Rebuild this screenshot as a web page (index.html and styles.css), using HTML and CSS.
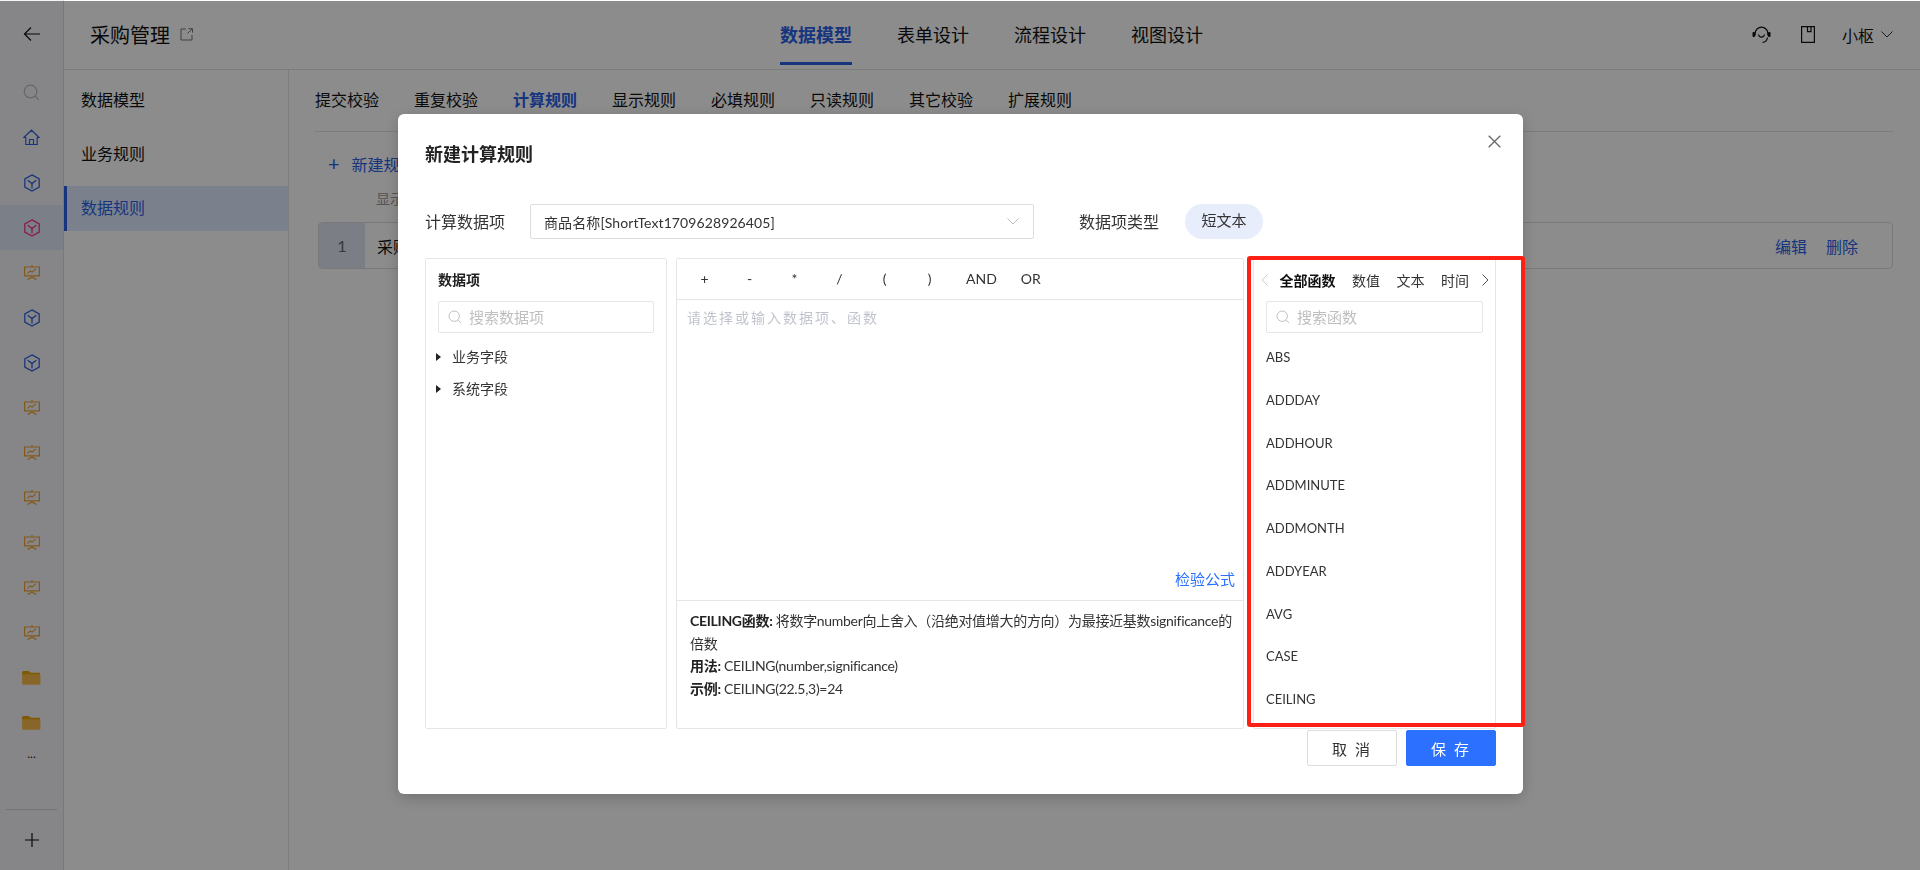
FILE: index.html
```html
<!DOCTYPE html>
<html lang="zh-CN">
<head>
    <meta charset="UTF-8">
    <meta name="viewport" content="width=device-width, initial-scale=1.0">
    <title>采购管理 - 数据规则</title>
    <link rel="stylesheet" href="styles.css">
</head>
<body>

<svg class="defs" width="0" height="0">
    <symbol id="cube" viewBox="0 0 18 18"><path d="M9 .9l7.2 4.1v8L9 17.1 1.8 13V5z M9 9.6V14.500 M4.700 6.300L9 9.6l4.300-3.300" fill="none" stroke="currentColor" stroke-width="1.3"/></symbol>
    <symbol id="screen" viewBox="0 0 16 15"><path d="M8 0v2 M.6 2h14.800v8.800H.6z M3.400 8.400l2.800-2.500 1.900 1.200 3.600-3.200 M8 10.800v1.200 M3.600 14.600L8 12l4.400 2.600" fill="none" stroke="currentColor" stroke-width="1.200"/></symbol>
    <symbol id="folder" viewBox="0 0 20 16"><path d="M1 1h6l2 2h10v3H0V2z" fill="#e8a200"/><path d="M0 4.500h19.500v10.200a1 1 0 0 1-1 1H1a1 1 0 0 1-1-1z" fill="#f7bb4e"/></symbol>
    <symbol id="search" viewBox="0 0 14 14"><circle cx="6.200" cy="6.200" r="5.200" fill="none" stroke="currentColor"/><path d="M10 10l3 3" fill="none" stroke="currentColor"/></symbol>
</svg>

<div class="page">
    <div class="rail">
        <div class="rail-back">
            <svg width="18" height="16" viewBox="0 0 18 16"><path d="M17 8H1.500M8 1.500L1.500 8 8 14.500" fill="none" stroke="#111" stroke-width="1.200"/></svg>
        </div>
        <div class="rail-item rail-gray"><svg width="17" height="17"><use href="#search"/></svg></div>
        <div class="rail-item rail-blue">
            <svg width="17" height="17" viewBox="0 0 17 17"><path d="M.8 8.500L8.500 1.200l7.700 7.300h-2v7H2.800v-7z M6.500 15.500v-5h4v5" fill="none" stroke="currentColor" stroke-width="1.200"/></svg>
        </div>
        <div class="rail-item rail-blue"><svg width="18" height="18"><use href="#cube"/></svg></div>
        <div class="rail-item rail-pink rail-active"><svg width="18" height="18"><use href="#cube"/></svg></div>
        <div class="rail-item rail-orange"><svg width="16" height="15"><use href="#screen"/></svg></div>
        <div class="rail-item rail-blue"><svg width="18" height="18"><use href="#cube"/></svg></div>
        <div class="rail-item rail-blue"><svg width="18" height="18"><use href="#cube"/></svg></div>
        <div class="rail-item rail-orange"><svg width="16" height="15"><use href="#screen"/></svg></div>
        <div class="rail-item rail-orange"><svg width="16" height="15"><use href="#screen"/></svg></div>
        <div class="rail-item rail-orange"><svg width="16" height="15"><use href="#screen"/></svg></div>
        <div class="rail-item rail-orange"><svg width="16" height="15"><use href="#screen"/></svg></div>
        <div class="rail-item rail-orange"><svg width="16" height="15"><use href="#screen"/></svg></div>
        <div class="rail-item rail-orange"><svg width="16" height="15"><use href="#screen"/></svg></div>
        <div class="rail-item"><svg width="19" height="15"><use href="#folder"/></svg></div>
        <div class="rail-item"><svg width="19" height="15"><use href="#folder"/></svg></div>
        <div class="rail-more">...</div>
        <div class="rail-add">
            <svg width="14" height="14" viewBox="0 0 14 14"><path d="M7 0v14M0 7h14" stroke="#111" stroke-width="1.200"/></svg>
        </div>
    </div>

    <div class="main">
        <div class="header">
            <div class="app-title">
                <span>采购管理</span>
                <svg width="13" height="13" viewBox="0 0 13 13"><path d="M6 1H1v11h11V7 M7.500 5.500L12 1 M8.500 .7h4v4" fill="none" stroke="#777" stroke-width="1"/></svg>
            </div>
            <div class="top-tabs">
                <a class="top-tab active">数据模型</a>
                <a class="top-tab">表单设计</a>
                <a class="top-tab">流程设计</a>
                <a class="top-tab">视图设计</a>
            </div>
            <div class="user-area">
                <svg width="19" height="18" viewBox="0 0 19 18"><path d="M3.200 9.500V7.500a6.300 6.300 0 0 1 12.600 0v2 M6.500 8.500c.5 3.500 5.500 3.500 6 0 M15.500 11.500c-.5 3-2.500 4.800-5 5" fill="none" stroke="#111" stroke-width="1.200"/><rect x="0.500" y="6" width="2.500" height="5" rx="1" fill="#111"/><rect x="16" y="6" width="2.500" height="5" rx="1" fill="#111"/></svg>
                <svg class="user-book" width="14" height="17" viewBox="0 0 14 17"><path d="M.6.600h12.800v15.800H.6z M6.500.6v5h3.500v-5" fill="none" stroke="#111" stroke-width="1.200"/></svg>
                <span class="user-name">小枢</span>
                <svg width="12" height="7" viewBox="0 0 12 7"><path d="M.5.500L6 6 11.500.5" fill="none" stroke="#333" stroke-width="1"/></svg>
            </div>
        </div>

        <div class="body">
            <div class="sidebar">
                <div class="side-item">数据模型</div>
                <div class="side-item">业务规则</div>
                <div class="side-item active">数据规则</div>
            </div>
            <div class="content">
                <div class="rule-tabs">
                    <span>提交校验</span>
                    <span>重复校验</span>
                    <span class="active">计算规则</span>
                    <span>显示规则</span>
                    <span>必填规则</span>
                    <span>只读规则</span>
                    <span>其它校验</span>
                    <span>扩展规则</span>
                </div>
                <div class="new-rule"><span class="new-plus">+</span>新建规则</div>
                <div class="rule-caption">显示规则</div>
                <div class="rule-row">
                    <div class="rule-index">1</div>
                    <div class="rule-name">采购数量</div>
                    <a>编辑</a>
                    <a>删除</a>
                </div>
            </div>
        </div>
    </div>
</div>

<div class="overlay"></div>

<div class="modal">
    <div class="modal-title">新建计算规则</div>
    <svg class="modal-close" width="13" height="13" viewBox="0 0 13 13"><path d="M.7.700l11.600 11.600M12.300.700L.7 12.300" stroke="#666" stroke-width="1.300"/></svg>

    <div class="form-row">
        <label class="form-label">计算数据项</label>
        <div class="select">
            <span>商品名称[ShortText1709628926405]</span>
            <svg width="12" height="7" viewBox="0 0 12 7"><path d="M.5.500L6 6 11.500.5" fill="none" stroke="#bbb" stroke-width="1"/></svg>
        </div>
        <label class="form-label type-label">数据项类型</label>
        <div class="pill">短文本</div>
    </div>

    <div class="panels">
        <div class="panel panel-left">
            <div class="panel-heading">数据项</div>
            <div class="search-box">
                <svg width="14" height="14"><use href="#search"/></svg>
                <span>搜索数据项</span>
            </div>
            <div class="tree-node">业务字段</div>
            <div class="tree-node">系统字段</div>
        </div>

        <div class="panel panel-mid">
            <div class="ops">
                <span>+</span><span>-</span><span>*</span><span>/</span><span>(</span><span>)</span>
                <span class="op-word">AND</span><span class="op-word">OR</span>
            </div>
            <div class="formula">
                <div class="formula-hint">请选择或输入数据项、函数</div>
                <a class="formula-check">检验公式</a>
            </div>
            <div class="func-desc">
                <p><b>CEILING函数:</b> 将数字number向上舍入（沿绝对值增大的方向）为最接近基数significance的倍数</p>
                <p><b>用法:</b> CEILING(number,significance)</p>
                <p><b>示例:</b> CEILING(22.5,3)=24</p>
            </div>
        </div>

        <div class="panel panel-right">
            <div class="func-tabs">
                <svg class="func-prev" width="7" height="12" viewBox="0 0 7 12"><path d="M6.500.5L1 6l5.500 5.500" fill="none" stroke="#ccc"/></svg>
                <b>全部函数</b><span>数值</span><span>文本</span><span>时间</span>
                <svg class="func-next" width="7" height="12" viewBox="0 0 7 12"><path d="M.5.5L6 6 .5 11.500" fill="none" stroke="#555"/></svg>
            </div>
            <div class="search-box">
                <svg width="14" height="14"><use href="#search"/></svg>
                <span>搜索函数</span>
            </div>
            <ul class="func-list">
                <li>ABS</li>
                <li>ADDDAY</li>
                <li>ADDHOUR</li>
                <li>ADDMINUTE</li>
                <li>ADDMONTH</li>
                <li>ADDYEAR</li>
                <li>AVG</li>
                <li>CASE</li>
                <li>CEILING</li>
            </ul>
        </div>
    </div>

    <div class="modal-footer">
        <button class="btn">取 消</button>
        <button class="btn btn-primary">保 存</button>
    </div>
</div>

<div class="red-mark"></div>

</body>
</html>
```

FILE: styles.css
```css
* {
    box-sizing: border-box;
}
html, body {
    margin: 0;
    height: 100%;
    overflow: hidden;
}
body {
    font-family: Lato, "Noto Sans CJK SC", sans-serif;
    font-size: 14px;
    color: #222;
    background-color: #fff;
}
.defs {
    position: absolute;
}
.page {
    display: flex;
    height: 870px;
}

/* left icon rail */
.rail {
    width: 64px;
    flex-shrink: 0;
    display: flex;
    flex-direction: column;
    background-color: #f4f5f7;
    border-right: 1px solid #dcdcdc;
}
.rail-back {
    height: 70px;
    flex-shrink: 0;
    display: flex;
    align-items: center;
    justify-content: center;
    padding-bottom: 2px;
}
.rail-item {
    height: 45px;
    flex-shrink: 0;
    display: flex;
    align-items: center;
    justify-content: center;
}
.rail-gray { color: #bbb; }
.rail-blue { color: #2f62e0; }
.rail-pink { color: #f5337f; }
.rail-orange { color: #f0a030; }
.rail-active { background-color: #e1e9f8; }
.rail-more {
    height: 30px;
    text-align: center;
    line-height: 18px;
    font-size: 12px;
    color: #111;
}
.rail-add {
    margin: auto 6px 0;
    height: 61px;
    border-top: 1px solid #d4d4d4;
    display: flex;
    align-items: center;
    justify-content: center;
}

/* header */
.main {
    flex: 1;
    min-width: 0;
    display: flex;
    flex-direction: column;
}
.header {
    height: 70px;
    flex-shrink: 0;
    display: grid;
    grid-template-columns: 1fr auto 1fr;
    align-items: center;
    padding: 0 27px 0 26px;
    border-bottom: 1px solid #e2e2e2;
}
.app-title {
    display: flex;
    align-items: center;
    gap: 10px;
    font-size: 20px;
    color: #111;
}
.top-tabs {
    display: flex;
    gap: 45px;
    height: 69px;
}
.top-tab {
    height: 65px;
    line-height: 70px;
    font-size: 18px;
    color: #111;
}
.top-tab.active {
    font-weight: 700;
    color: #2b62e8;
    border-bottom: 3px solid #2b62e8;
}
.user-area {
    display: flex;
    align-items: center;
    justify-content: flex-end;
}
.user-book {
    margin-left: 30px;
}
.user-name {
    margin: 0 7px 0 27px;
    font-size: 16px;
    color: #111;
}

/* body */
.body {
    flex: 1;
    display: flex;
    min-height: 0;
}
.sidebar {
    width: 225px;
    flex-shrink: 0;
    padding-top: 8px;
    border-right: 1px solid #e2e2e2;
}
.side-item {
    height: 45px;
    margin-bottom: 9px;
    line-height: 43px;
    padding-left: 17px;
    font-size: 16px;
    color: #111;
}
.side-item.active {
    padding-left: 14px;
    border-left: 3px solid #2b62e8;
    color: #2b62e8;
    background-color: #e1ecff;
}
.content {
    flex: 1;
    padding: 0 27px 0 26px;
}
.rule-tabs {
    height: 62px;
    display: flex;
    align-items: center;
    gap: 35px;
    padding-bottom: 3px;
    font-size: 16px;
    color: #111;
    border-bottom: 1px solid #e2e2e2;
}
.rule-tabs .active {
    font-weight: 700;
    color: #2b62e8;
}
.new-rule {
    height: 28px;
    margin: 17px 0 0 13px;
    font-size: 16px;
    line-height: 28px;
    color: #2b62e8;
}
.new-plus {
    margin-right: 12px;
    font-size: 20px;
}
.rule-caption {
    height: 20px;
    margin: 12px 0 0 61px;
    font-size: 14px;
    line-height: 20px;
    color: #999;
}
.rule-row {
    height: 47px;
    margin: 13px 0 0 3px;
    display: flex;
    align-items: center;
    border: 1px solid #ddd;
    border-radius: 4px;
    overflow: hidden;
}
.rule-row a {
    margin-right: 19px;
    font-size: 16px;
    color: #2b62e8;
}
.rule-row a:last-child {
    margin-right: 34px;
}
.rule-index {
    width: 46px;
    height: 100%;
    line-height: 45px;
    text-align: center;
    font-size: 16px;
    color: #666;
    background-color: #e0e5f0;
}
.rule-name {
    flex: 1;
    padding-left: 12px;
    font-size: 16px;
    color: #111;
}

.overlay {
    position: fixed;
    inset: 1px 0 0;
    background-color: rgba(0,0,0,.45);
}

/* dialog */
.modal {
    position: fixed;
    left: 398px;
    top: 114px;
    width: 1125px;
    height: 680px;
    padding: 0 27px;
    background-color: #fff;
    border-radius: 6px;
    box-shadow: 0 4px 16px rgba(0,0,0,.2);
}
.modal-title {
    height: 90px;
    padding-top: 27px;
    font-size: 18px;
    font-weight: 700;
    line-height: 26px;
    color: #222;
}
.modal-close {
    position: absolute;
    right: 22px;
    top: 21px;
}
.form-row {
    height: 35px;
    display: flex;
    align-items: center;
}
.form-label {
    padding-bottom: 2px;
    font-size: 16px;
    color: #333;
    width: 105px;
}
.select {
    width: 504px;
    height: 35px;
    display: flex;
    align-items: center;
    justify-content: space-between;
    padding: 0 14px 0 13px;
    font-size: 14px;
    letter-spacing: .1px;
    color: #333;
    border: 1px solid #ddd;
    border-radius: 2px;
}
.type-label {
    width: auto;
    margin: 0 26px 0 45px;
}
.pill {
    width: 78px;
    height: 35px;
    line-height: 33px;
    text-align: center;
    font-size: 15px;
    color: #333;
    background-color: #e8edfb;
    border-radius: 18px;
}
.panels {
    height: 471px;
    margin-top: 19px;
    display: grid;
    grid-template-columns: 242px 568px 243px;
    gap: 9px;
}
.panel {
    border: 1px solid #e6e6e6;
    border-radius: 2px;
    min-width: 0;
}
.panel-left {
    padding: 0 12px;
}
.panel-heading {
    height: 42px;
    line-height: 42px;
    font-weight: 700;
    font-size: 14px;
}
.search-box {
    height: 32px;
    display: flex;
    align-items: center;
    gap: 7px;
    padding: 0 0 1px 9px;
    font-size: 15px;
    color: #bfbfbf;
    border: 1px solid #e6e6e6;
    border-radius: 2px;
}
.tree-node {
    position: relative;
    height: 32px;
    line-height: 32px;
    padding-left: 14px;
    font-size: 14px;
    color: #333;
}
.panel-left .search-box {
    margin-bottom: 8px;
}
.tree-node::before {
    content: "";
    position: absolute;
    left: -2px;
    top: 12px;
    border-left: 5px solid #222;
    border-top: 4px solid transparent;
    border-bottom: 4px solid transparent;
}
.panel-mid {
    display: flex;
    flex-direction: column;
}
.ops {
    height: 41px;
    flex-shrink: 0;
    display: flex;
    align-items: center;
    padding: 0 0 2px 5px;
    font-size: 14px;
    color: #333;
    border-bottom: 1px solid #e6e6e6;
}
.ops span {
    width: 45px;
    text-align: center;
}
.op-word {
    width: auto !important;
}
.ops span:nth-child(7) {
    margin: 0 24px 0 14px;
}
.formula {
    height: 301px;
    flex-shrink: 0;
    display: flex;
    flex-direction: column;
    padding: 0 8px 0 10px;
    border-bottom: 1px solid #e6e6e6;
}
.formula-hint {
    padding-top: 7px;
    font-size: 14px;
    letter-spacing: 2px;
    color: #c0c4cc;
}
.formula-check {
    margin-top: auto;
    margin-bottom: 11px;
    align-self: flex-end;
    font-size: 15px;
    color: #2b70ff;
}
.func-desc {
    padding: 9px 8px 0 13px;
    font-size: 14px;
    line-height: 22.6px;
    color: #333;
}
.func-desc p {
    margin: 0;
    letter-spacing: -.3px;
}
.func-desc b {
    color: #222;
}
.panel-right {
    padding: 0 12px;
}
.func-tabs {
    height: 42px;
    margin-right: -8px;
    display: flex;
    align-items: center;
    gap: 16.5px;
    font-size: 14px;
    color: #333;
    white-space: nowrap;
}
.func-tabs svg {
    flex: none;
}
.func-tabs b {
    color: #111;
}
.func-prev {
    margin: 0 -5px 0 -5px;
}
.func-next {
    margin-left: -4px;
}
.func-list {
    list-style: none;
    margin: 3px 0 0;
    padding: 0;
    font-size: 13px;
    color: #333;
}
.func-list li {
    height: 42.75px;
    line-height: 43px;
}
.modal-footer {
    margin-top: 1px;
    display: flex;
    justify-content: flex-end;
    gap: 9px;
}
.btn {
    width: 90px;
    height: 36px;
    font-family: inherit;
    font-size: 15px;
    color: #333;
    background-color: #fff;
    border: 1px solid #ddd;
    border-radius: 2px;
    letter-spacing: 2px;
}
.btn-primary {
    color: #fff;
    background-color: #2b70ff;
    border-color: #2b70ff;
}

/* annotation drawn on top of the screenshot */
.red-mark {
    position: fixed;
    left: 1247px;
    top: 256px;
    width: 278px;
    height: 471px;
    border: 4px solid #ff2015;
    border-radius: 3px;
}
```
